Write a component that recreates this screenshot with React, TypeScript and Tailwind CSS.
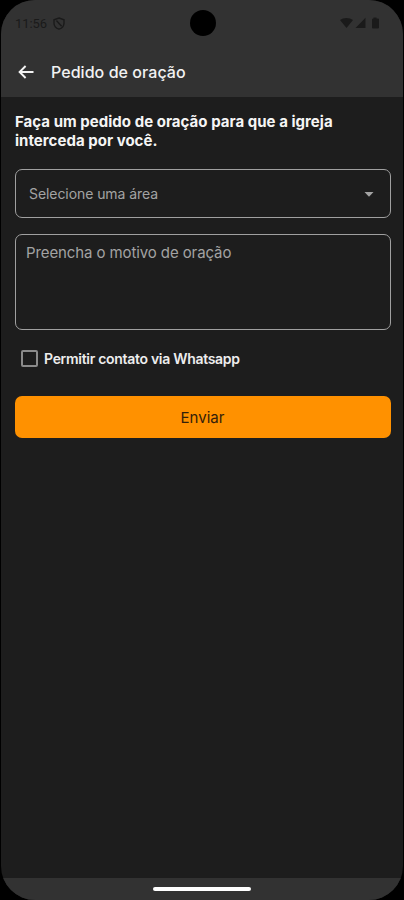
import { useState } from "react";

function StatusBar() {
  return (
    <div className="relative flex h-[46px] items-center justify-between pr-[23px] pl-[14px] text-[#1a1a1a]">
      <div className="flex items-center gap-[6px]">
        <span className="font-['Roboto'] text-[13px] leading-none tracking-[-0.1px]">11:56</span>
        <svg width="12" height="13" viewBox="0 0 12 13" fill="none" stroke="currentColor" strokeWidth="1.4">
          <path d="M6 1 L11 2.8 V6.2 C11 9 9 11.2 6 12.2 C3 11.2 1 9 1 6.2 V2.8 Z" />
          <path d="M3.4 3.6 L8.6 9.2" />
        </svg>
      </div>
      <div className="absolute top-[10px] left-[189px] size-[26px] rounded-full bg-black" />
      <svg width="40" height="13" viewBox="0 0 40 13" fill="currentColor">
        <path d="M0 3 C3.5 0.3 9.5 0.3 13 3 L6.5 11 Z" />
        <path d="M25.500 0.800 V11 H15.500 Z" />
        <path d="M33.500 0.500 H36.500 V1.500 H38 Q39 1.500 39 2.500 V10.500 Q39 11.500 38 11.500 H33 Q32 11.500 32 10.500 V2.500 Q32 1.500 33.500 1.500 Z" />
      </svg>
    </div>
  );
}

export default function App() {
  const [allowContact, setAllowContact] = useState(false);

  return (
    <main className="h-[900px] w-[404px] overflow-hidden bg-black px-px font-['Inter',sans-serif]">
      <div className="flex h-full flex-col overflow-hidden rounded-[34px] bg-[#1d1d1d]">
        <header className="h-[97px] shrink-0 bg-[#323232]">
          <StatusBar />
          <div className="flex h-[51px] items-center pl-[17px] text-[#f2f2f2]">
            <button className="w-[33px]" aria-label="Voltar">
              <svg width="16" height="14" viewBox="0 0 16 14" fill="none" stroke="currentColor" strokeWidth="1.9">
                <path d="M15.500 7 H2 M7.600 1 L1.600 7 L7.600 13" />
              </svg>
            </button>
            <h1 className="text-[16px] font-medium tracking-[0.05px] whitespace-nowrap">Pedido de oração</h1>
          </div>
        </header>

        <section className="flex flex-1 flex-col pt-[15px] pr-[12px] pl-[14px]">
          <h2 className="text-[15px] leading-[19px] font-bold tracking-[0.03px] whitespace-nowrap text-[#f5f5f5]">
            Faça um pedido de oração para que a igreja
            <br />
            interceda por você.
          </h2>
          <button className="mt-[19px] flex h-[49px] items-center justify-between rounded-[7px] border border-[#a0a0a0] pr-[16px] pl-[13px] text-[#a3a3a3]">
            <span className="text-[14px] tracking-[-0.07px] whitespace-nowrap">Selecione uma área</span>
            <svg className="mt-[2px]" width="10" height="5" viewBox="0 0 10 5" fill="currentColor">
              <path d="M0.500 0 H9.500 L5 4.800 Z" />
            </svg>
          </button>
          <textarea
            className="mt-[16px] h-[96px] resize-none rounded-[7px] border border-[#a0a0a0] px-[10px] py-[8px] text-[15px] leading-[20px] tracking-[-0.1px] text-[#a3a3a3] outline-none placeholder:text-[#a3a3a3]"
            placeholder="Preencha o motivo de oração"
          />
          <label className="mt-[18px] ml-[6px] flex h-[20px] items-center gap-[6px]">
            <input
              type="checkbox"
              checked={allowContact}
              onChange={(e) => setAllowContact(e.target.checked)}
              className="size-[17px] appearance-none rounded-[2px] border-2 border-[#8b8b8b] checked:bg-[#ff9100]"
            />
            <span className="text-[14px] font-semibold tracking-[-0.3px] whitespace-nowrap text-[#ededed]">
              Permitir contato via Whatsapp
            </span>
          </label>
          <button className="mt-[28px] h-[42px] rounded-[7px] bg-[#ff9100] pt-[2px] pr-px text-[15px] text-[#33200a]">
            Enviar
          </button>
        </section>

        <footer className="flex h-[22px] shrink-0 justify-center bg-[#323232] pt-[9px]">
          <div className="h-[4px] w-[98px] rounded-full bg-white" />
        </footer>
      </div>
    </main>
  );
}
